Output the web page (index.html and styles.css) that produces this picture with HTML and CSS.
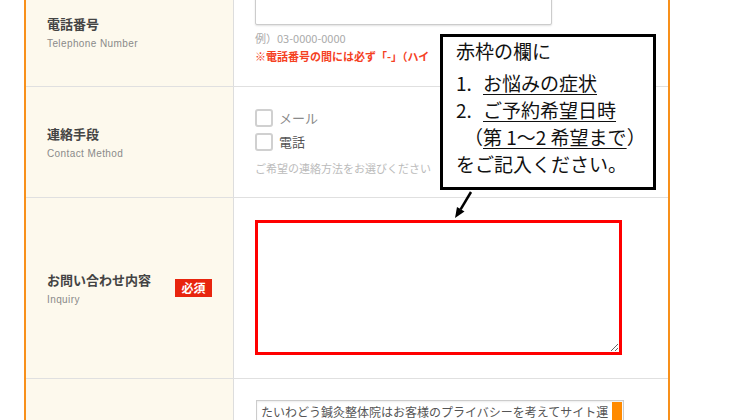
FILE: index.html
```
<!DOCTYPE html>
<html lang="ja">
<head>
  <meta charset="UTF-8">
  <meta name="viewport" content="width=device-width, initial-scale=1.0">
  <title>お問い合わせフォーム</title>
  <link rel="stylesheet" href="styles.css">
</head>
<body>
  <div class="page">
    <div class="form">
      <div class="row row-tel">
        <div class="label">
          <div>
            <div class="label-ja">電話番号</div>
            <div class="label-en">Telephone Number</div>
          </div>
        </div>
        <div class="field">
          <input type="text" class="text-input">
          <div class="example">例）03-0000-0000</div>
          <div class="note">※電話番号の間には必ず「-」（ハイ</div>
        </div>
      </div>
      <div class="row row-contact">
        <div class="label">
          <div>
            <div class="label-ja">連絡手段</div>
            <div class="label-en">Contact Method</div>
          </div>
        </div>
        <div class="field">
          <label class="check"><span class="box"></span><span class="check-text light">メール</span></label>
          <label class="check"><span class="box"></span><span class="check-text">電話</span></label>
          <div class="hint">ご希望の連絡方法をお選びください</div>
        </div>
      </div>
      <div class="row row-inquiry">
        <div class="label">
          <div>
            <div class="label-ja">お問い合わせ内容</div>
            <div class="label-en">Inquiry</div>
          </div>
          <span class="required">必須</span>
        </div>
        <div class="field">
          <textarea class="inquiry"></textarea>
        </div>
      </div>
      <div class="row row-privacy">
        <div class="label"></div>
        <div class="field">
          <div class="policy">
            <div class="policy-text">たいわどう鍼灸整体院はお客様のプライバシーを考えてサイト運</div>
            <div class="policy-bar"></div>
          </div>
        </div>
      </div>
    </div>

    <div class="callout">
      <div class="callout-line first">赤枠の欄に</div>
      <div class="callout-line"><span class="num">1.</span><u>お悩みの症状</u></div>
      <div class="callout-line"><span class="num">2.</span><u>ご予約希望日時</u></div>
      <div class="callout-line indent">（<u>第 1～2 希望まで</u>）</div>
      <div class="callout-line">をご記入ください。</div>
    </div>
    <svg class="arrow" width="30" height="32" viewBox="0 0 30 32">
      <line x1="22" y1="4" x2="11.6" y2="21.3" stroke="#000" stroke-width="2.5"/>
      <polygon points="6,30 15.5,23.5 8,19" fill="#000"/>
    </svg>
  </div>
</body>
</html>
```

FILE: styles.css
```
* {
  padding: 0;
  margin: 0;
  box-sizing: border-box;
}
html, body {
  background: #fff;
  overflow: hidden;
}
body {
  font-family: "Noto Sans CJK JP", "Liberation Sans", sans-serif;
  color: #333;
}
.page {
  position: relative;
  display: flow-root;
  height: 420px;
  overflow: hidden;
}
.form {
  width: 646px;
  margin: -22px 0 0 24px;
  border-left: 2px solid #f8901a;
  border-right: 2px solid #f8901a;
}
.row {
  display: grid;
  grid-template-columns: 208px 1fr;
  border-bottom: 1px solid #e0e0e0;
}
.label {
  display: flex;
  align-items: center;
  padding: 0 21px;
  background: #fdf9ed;
  border-right: 1px solid #ddd;
}
.label-ja {
  font-size: 13px;
  line-height: 20px;
  font-weight: bold;
  color: #444;
}
.label-en {
  margin-top: 3px;
  font-family: "Liberation Sans", sans-serif;
  font-size: 10px;
  line-height: 14px;
  letter-spacing: 0.4px;
  color: #8a8a8a;
}
.required {
  margin-left: auto;
  width: 37px;
  height: 18px;
  line-height: 18px;
  text-align: center;
  font-size: 12px;
  font-weight: bold;
  color: #fff;
  background: #e8250e;
}
.field {
  padding-left: 21px;
}

/* 電話番号 */
.row-tel .field {
  padding-top: 13px;
  padding-bottom: 21px;
}
.text-input {
  display: block;
  width: 297px;
  height: 34px;
  border: 1px solid #ccc;
  border-radius: 2px;
  box-shadow: 0 1px 2px rgba(0, 0, 0, 0.12);
  background: #fff;
}
.example {
  margin-top: 4px;
  font-size: 11px;
  line-height: 18px;
  color: #aaa;
}
.note {
  font-size: 11px;
  line-height: 18px;
  font-weight: bold;
  color: #f5411f;
  white-space: nowrap;
}

/* 連絡手段 */
.row-contact .field {
  padding-top: 22px;
  padding-bottom: 20px;
}
.check {
  display: flex;
  align-items: flex-start;
  height: 24px;
}
.box {
  width: 18px;
  height: 18px;
  border: 2px solid #d0d0d0;
  border-radius: 3px;
  background: #fff;
}
.check-text {
  margin-left: 6px;
  font-size: 13px;
  line-height: 18px;
  color: #555;
}
.check-text.light {
  color: #8a8a8a;
}
.hint {
  margin-top: 2px;
  font-size: 11px;
  line-height: 18px;
  color: #bbb;
  white-space: nowrap;
}

/* お問い合わせ内容 */
.row-inquiry .field {
  padding-top: 22px;
  padding-bottom: 23px;
}
.inquiry {
  display: block;
  width: 367px;
  height: 135px;
  border: 3px solid #f00;
  background: #fff;
  resize: both;
  outline: none;
}

/* プライバシー */
.row-privacy {
  height: 80px;
}
.row-privacy .field {
  padding-top: 21px;
}
.policy {
  display: flex;
  width: 368px;
  height: 60px;
  border: 1px solid #ccc;
  box-shadow: inset 0 1px 2px rgba(0, 0, 0, 0.08);
  margin-left: 1px;
}
.policy-text {
  flex: 1;
  min-width: 0;
  padding: 2px 4px;
  font-size: 12px;
  line-height: 18px;
  color: #555;
  white-space: nowrap;
}
.policy-bar {
  flex: none;
  width: 10px;
  margin: 1px 1px 0 0;
  background: #ff8a00;
}

/* 吹き出し */
.callout {
  position: absolute;
  left: 440px;
  top: 34px;
  width: 216px;
  height: 156px;
  padding: 0 0 0 13px;
  border: 3px solid #000;
  background: #fff;
  font-size: 19px;
  color: #111;
}
.callout-line {
  line-height: 27px;
  white-space: nowrap;
}
.callout-line.first {
  margin-bottom: 5px;
}
.callout-line.indent {
  padding-left: 8px;
}
.callout .num {
  display: inline-block;
  width: 27px;
}
.callout u {
  text-underline-offset: 3px;
  text-decoration-thickness: 1px;
}
.arrow {
  position: absolute;
  left: 449px;
  top: 188px;
}
```
